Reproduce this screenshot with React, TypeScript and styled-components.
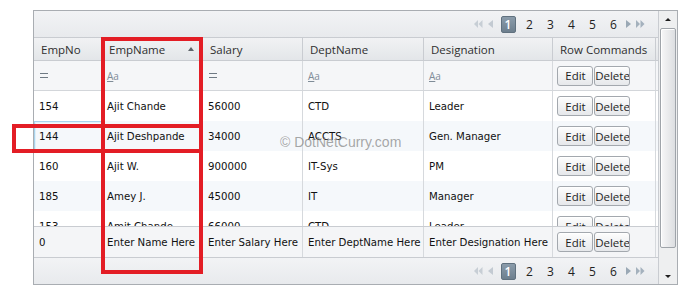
import React from 'react';
import styled, { createGlobalStyle } from 'styled-components';

const Global = createGlobalStyle`
  html, body { margin: 0; padding: 0; background: #ffffff; }
  body { width: 680px; height: 287px; overflow: hidden; }
`;

const COLS = '68px 101px 100px 121px 129px 103px 1fr';
const BODY_FONT = `"DejaVu Sans", Verdana, sans-serif`;
const UI_FONT = `"Open Sans", "Noto Sans", sans-serif`;

const Page = styled.div`
  position: relative;
  width: 680px;
  height: 287px;
  padding: 10px 0 0 33px;
  box-sizing: border-box;
`;

const Frame = styled.div`
  width: 645px;
  height: 275px;
  box-sizing: border-box;
  border: 1px solid #a9adb2;
  display: flex;
  background: #fff;
`;

const Main = styled.div`
  flex: 1;
  min-width: 0;
  display: flex;
  flex-direction: column;
`;

const Pager = styled.div<{ $bottom?: boolean }>`
  height: ${p => (p.$bottom ? 27 : 26)}px;
  flex: none;
  box-sizing: border-box;
  display: flex;
  align-items: center;
  justify-content: flex-end;
  padding-right: 12px;
  background: linear-gradient(#f2f3f5, #e8eaed);
  ${p => (p.$bottom ? 'border-top: 1px solid #c9ccd1;' : '')}
`;

const NavIcon = styled.span<{ $w: number }>`
  display: flex;
  align-items: center;
  justify-content: center;
  width: ${p => p.$w}px;
  height: 16px;
`;

const PageLink = styled.span<{ $w: number }>`
  display: flex;
  align-items: center;
  justify-content: center;
  width: ${p => p.$w}px;
  height: 16px;
  font-family: ${UI_FONT};
  font-size: 12px;
  color: #222;
`;

const CurrentPage = styled.span`
  display: flex;
  align-items: center;
  justify-content: center;
  width: 15px;
  height: 17px;
  box-sizing: border-box;
  border: 1px solid #60717f;
  border-radius: 2px;
  background: linear-gradient(#8b9cab, #6d7f8e);
  color: #fff;
  font-family: ${UI_FONT};
  font-size: 12px;
  font-weight: 600;
`;

const Row = styled.div<{ $h: number; $bg?: string; $top?: string; $bottom?: string }>`
  display: grid;
  grid-template-columns: ${COLS};
  height: ${p => p.$h}px;
  flex: none;
  box-sizing: border-box;
  background: ${p => p.$bg || '#fff'};
  ${p => (p.$top ? `border-top: 1px solid ${p.$top};` : '')}
  ${p => (p.$bottom ? `border-bottom: 1px solid ${p.$bottom};` : '')}
`;

const HeaderRow = styled(Row)`
  background: linear-gradient(#f1f2f4, #e3e6e9);
`;

const HeadCell = styled.div`
  display: flex;
  align-items: center;
  justify-content: space-between;
  padding: 0 8px 0 7px;
  border-right: 1px solid #c9ccd1;
  font-family: ${UI_FONT};
  font-size: 11.5px;
  color: #2f2f2f;
  white-space: nowrap;
  overflow: hidden;
  &:last-child { border-right: none; }
`;

const SortArrow = styled.span`
  width: 0;
  height: 0;
  border-left: 3.5px solid transparent;
  border-right: 3.5px solid transparent;
  border-bottom: 4px solid #5e646a;
  margin-top: -1px;
`;

const Cell = styled.div<{ $focus?: boolean }>`
  display: flex;
  align-items: center;
  padding: 0 0 0 5px;
  border-right: 1px solid #d6d9dd;
  font-family: ${BODY_FONT};
  font-size: 10.2px;
  color: #111;
  white-space: nowrap;
  overflow: hidden;
  box-sizing: border-box;
  ${p => (p.$focus ? 'box-shadow: inset 1px 1px 0 #a9d3ec, inset 2px 2px 0 #dff0fa;' : '')}
  &:last-child { border-right: none; }
`;

const CmdCell = styled(Cell)`
  padding-left: 4px;
  gap: 1px;
`;

const Btn = styled.button`
  width: 36px;
  height: 20px;
  padding: 0 0 0 1px;
  box-sizing: border-box;
  border: 1px solid #a3a8ae;
  border-radius: 3px;
  background: linear-gradient(#fdfdfd, #e6e8eb);
  box-shadow: inset 0 1px 0 #fff;
  font-family: ${UI_FONT};
  font-size: 11.5px;
  color: #1e1e1e;
  white-space: nowrap;
  overflow: hidden;
  display: flex;
  align-items: center;
  justify-content: center;
`;

const EqIcon = styled.span`
  width: 8px;
  height: 3px;
  border-top: 1.5px solid #6f7a84;
  border-bottom: 1.5px solid #6f7a84;
  margin-left: 1px;
`;

const AaIcon = styled.span`
  font-family: ${UI_FONT};
  font-size: 10px;
  color: #7f8c98;
  & > u { text-decoration-color: #7f8c98; }
`;

const Body = styled.div`
  height: 135px;
  flex: none;
  overflow: hidden;
  display: flex;
  flex-direction: column;
`;

const Spacer = styled.div`
  flex: 1;
`;

const Scrollbar = styled.div`
  width: 19px;
  flex: none;
  box-sizing: border-box;
  border-left: 1px solid #c9ccd1;
  background: #eeeff0;
  display: flex;
  flex-direction: column;
  align-items: center;
`;

const ArrowBox = styled.div`
  height: 16px;
  flex: none;
  display: flex;
  align-items: center;
  justify-content: center;
`;

const UpArrow = styled.span`
  width: 0; height: 0;
  border-left: 3px solid transparent;
  border-right: 3px solid transparent;
  border-bottom: 3px solid #1e1e1e;
`;

const DownArrow = styled.span`
  width: 0; height: 0;
  border-left: 3px solid transparent;
  border-right: 3px solid transparent;
  border-top: 3px solid #1e1e1e;
`;

const Thumb = styled.div`
  width: 16px;
  height: 220px;
  margin-top: 1px;
  box-sizing: border-box;
  border: 1px solid #9fa4aa;
  border-radius: 2px;
  background: linear-gradient(90deg, #f7f7f8, #e7e8ea 60%, #dcdee1);
  box-shadow: inset 1px 1px 0 #fff;
`;

const ScrollFill = styled.div`
  flex: 1;
`;

const RedBox = styled.div`
  position: absolute;
  box-sizing: border-box;
  border: 4px solid #e31d25;
  pointer-events: none;
`;

const Watermark = styled.div`
  position: absolute;
  left: 280px;
  top: 134px;
  font-family: "Liberation Sans", Arial, sans-serif;
  font-size: 14px;
  color: rgba(130, 130, 130, 0.7);
  white-space: nowrap;
  pointer-events: none;
`;

const Tri = ({ dir, color, double }: { dir: 'l' | 'r'; color: string; double?: boolean }) => {
  const w = double ? 9 : 6;
  const one = (x: number) =>
    dir === 'l' ? `M${x + 4} 0 L${x} 4 L${x + 4} 8 Z` : `M${x} 0 L${x + 4} 4 L${x} 8 Z`;
  return (
    <svg width={w} height={8} viewBox={`0 0 ${w} 8`}>
      <path d={double ? `${one(0)} ${one(4.5)}` : (dir === 'l' ? 'M5 0 L0 4 L5 8 Z' : 'M0 0 L5 4 L0 8 Z')} fill={color} />
    </svg>
  );
};

const PagerBar = ({ bottom }: { bottom?: boolean }) => (
  <Pager $bottom={bottom}>
    <NavIcon $w={14}><Tri dir="l" color="#c7ced5" double /></NavIcon>
    <NavIcon $w={12}><Tri dir="l" color="#c3cad2" /></NavIcon>
    <PageLink $w={22}><CurrentPage>1</CurrentPage></PageLink>
    {[2, 3, 4, 5, 6].map(n => (
      <PageLink key={n} $w={21}>{n}</PageLink>
    ))}
    <NavIcon $w={10}><Tri dir="r" color="#9aa8b5" /></NavIcon>
    <NavIcon $w={12}><Tri dir="r" color="#a4b1bd" double /></NavIcon>
  </Pager>
);

type Emp = { no: string; name: string; sal: string; dept: string; des: string };
const data: Emp[] = [
  { no: '154', name: 'Ajit Chande', sal: '56000', dept: 'CTD', des: 'Leader' },
  { no: '144', name: 'Ajit Deshpande', sal: '34000', dept: 'ACCTS', des: 'Gen. Manager' },
  { no: '160', name: 'Ajit W.', sal: '900000', dept: 'IT-Sys', des: 'PM' },
  { no: '185', name: 'Amey J.', sal: '45000', dept: 'IT', des: 'Manager' },
  { no: '153', name: 'Amit Chande', sal: '66000', dept: 'CTD', des: 'Leader' },
];

const Commands = () => (
  <CmdCell>
    <Btn>Edit</Btn>
    <Btn>Delete</Btn>
  </CmdCell>
);

export default function App() {
  return (
    <>
      <Global />
      <Page>
        <Frame>
          <Main>
            <PagerBar />
            <HeaderRow $h={24} $top="#c9ccd1" $bottom="#c9ccd1">
              <HeadCell>EmpNo</HeadCell>
              <HeadCell>EmpName<SortArrow /></HeadCell>
              <HeadCell>Salary</HeadCell>
              <HeadCell>DeptName</HeadCell>
              <HeadCell>Designation</HeadCell>
              <HeadCell>Row Commands</HeadCell>
              <HeadCell />
            </HeaderRow>
            <Row $h={30} $bg="#f5f6f8" $bottom="#d3d6da">
              <Cell><EqIcon /></Cell>
              <Cell><AaIcon><u>A</u>a</AaIcon></Cell>
              <Cell><EqIcon /></Cell>
              <Cell><AaIcon><u>A</u>a</AaIcon></Cell>
              <Cell><AaIcon><u>A</u>a</AaIcon></Cell>
              <Commands />
              <Cell />
            </Row>
            <Body>
              {data.map((d, i) => (
                <Row key={d.no} $h={30} $bg={i % 2 ? '#f5f8fb' : '#ffffff'}>
                  <Cell $focus={i === 1}>{d.no}</Cell>
                  <Cell>{d.name}</Cell>
                  <Cell>{d.sal}</Cell>
                  <Cell>{d.dept}</Cell>
                  <Cell>{d.des}</Cell>
                  <Commands />
                  <Cell />
                </Row>
              ))}
            </Body>
            <Row $h={31} $bg="#f4f5f7" $top="#c9ccd1">
              <Cell>0</Cell>
              <Cell>Enter Name Here</Cell>
              <Cell>Enter Salary Here</Cell>
              <Cell>Enter DeptName Here</Cell>
              <Cell>Enter Designation Here</Cell>
              <Commands />
              <Cell />
            </Row>
            <Spacer />
            <PagerBar bottom />
          </Main>
          <Scrollbar>
            <ArrowBox><UpArrow /></ArrowBox>
            <Thumb />
            <ScrollFill />
            <ArrowBox><DownArrow /></ArrowBox>
          </Scrollbar>
        </Frame>
        <RedBox style={{ left: 101, top: 37, width: 102, height: 237 }} />
        <RedBox style={{ left: 12, top: 124, width: 191, height: 29 }} />
        <Watermark>© DotNetCurry.com</Watermark>
      </Page>
    </>
  );
}
